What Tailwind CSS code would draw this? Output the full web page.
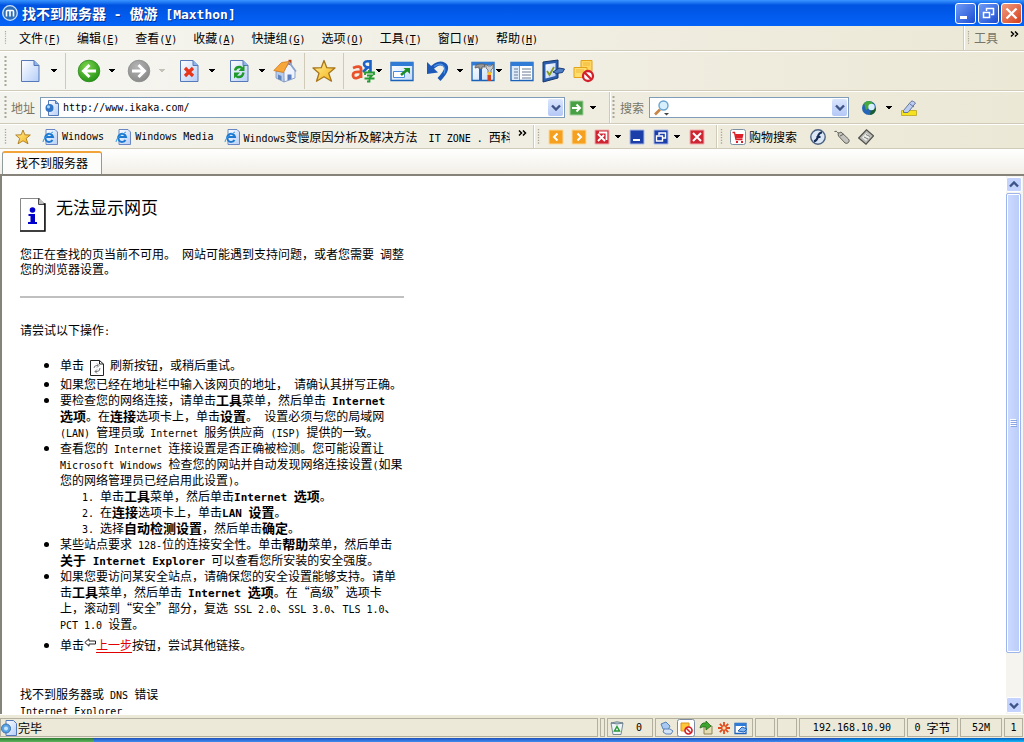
<!DOCTYPE html>
<html lang="zh-CN">
<head>
<meta charset="utf-8">
<title>找不到服务器 - 傲游 [Maxthon]</title>
<script src="https://cdn.jsdelivr.net/npm/@tailwindcss/browser@4"></script>
</head>
<body class="flex h-screen flex-col overflow-hidden bg-[#ece9d8] font-['Noto_Sans_CJK_SC',sans-serif] text-[12px] leading-4 text-black [&_span]:font-['DejaVu_Sans_Mono',monospace] [&_span]:text-[10px] [&_span]:leading-none [&_span]:whitespace-pre [&_svg]:shrink-0">

<svg class="absolute size-0" aria-hidden="true">
  <defs>
    <linearGradient id="sheet" x1="0" y1="0" x2="1" y2="1"><stop offset="0" stop-color="#fff"/><stop offset="1" stop-color="#b4cdf8"/></linearGradient>
    <radialGradient id="green" cx=".4" cy=".3" r=".8"><stop offset="0" stop-color="#7bd44a"/><stop offset="1" stop-color="#1c8c12"/></radialGradient>
    <radialGradient id="gray" cx=".4" cy=".3" r=".8"><stop offset="0" stop-color="#b4b4b4"/><stop offset="1" stop-color="#858585"/></radialGradient>
    <linearGradient id="gold" x1="0" y1="0" x2="1" y2="1"><stop offset="0" stop-color="#fff3a0"/><stop offset="1" stop-color="#f5b010"/></linearGradient>
    <linearGradient id="win" x1="0" y1="0" x2="1" y2="1"><stop offset="0" stop-color="#fff"/><stop offset="1" stop-color="#c3dcfa"/></linearGradient>
    <symbol id="caret" viewBox="0 0 8 4"><path d="M1 0h6v1H6v1H5v1H3V2H2V1H1z" fill="currentColor"/></symbol>
    <symbol id="page" viewBox="0 0 24 24"><path d="M3.500 1.500h12.500l5 5v16h-17.500z" fill="url(#sheet)" stroke="#5578b8"/><path d="M16 1.500v5h5" fill="#8fb4ea" stroke="#5578b8"/></symbol>
    <symbol id="star" viewBox="0 0 24 24"><path d="M12 1.500l2.800 7.200 8.200.3-6.300 5.200 2.800 8L12 17.700l-7.500 4.500 2.500-8L1 9l8.200-.3z" fill="url(#gold)" stroke="#a8761c" stroke-width="1.300" stroke-linejoin="round"/></symbol>
    <symbol id="ie" viewBox="0 0 16 16"><path d="M4 .5h9l2.500 2.500v12.500H4z" fill="url(#sheet)" stroke="#6a87c4"/><path d="M10.500 11A4 4 0 1 1 11 8H4" fill="none" stroke="#1d78cf" stroke-width="2"/><path d="M1 13Q1 8 11 3" fill="none" stroke="#3c9be8"/></symbol>
    <symbol id="pageglobe" viewBox="0 0 16 16"><path d="M4.500.5h7l3 3v12h-10z" fill="url(#sheet)" stroke="#5578b8"/><path d="M11.500.5v3h3" fill="#8fb4ea" stroke="#5578b8"/><circle cx="5.500" cy="8" r="4" fill="#2f74c6"/><circle cx="4.500" cy="6.800" r="1.600" fill="#a9d6fa"/></symbol>
    <symbol id="grip" viewBox="0 0 3 24"><path d="M1.500 0v24" stroke="#aaa799" stroke-width="2" stroke-dasharray="2 2"/></symbol>
    <symbol id="chev" viewBox="0 0 10 7"><path d="M1 1.500l4 4 4-4" fill="none" stroke="#3e5486" stroke-width="2.400"/></symbol>
    <symbol id="more" viewBox="0 0 9 6"><path d="M1 .5L3.500 3 1 5.500M5 .5L7.500 3 5 5.500" fill="none" stroke="#000" stroke-width="1.500"/></symbol>
    <symbol id="ban" viewBox="0 0 12 12"><circle cx="6" cy="6" r="4.700" fill="#fff" stroke="#d3202a" stroke-width="2.200"/><path d="M3 3l6 6" stroke="#d3202a" stroke-width="2.200"/></symbol>
  </defs>
</svg>

<header class="flex h-[26px] shrink-0 items-center bg-linear-to-b from-[#3a95ff] via-[#0053e1] via-20% to-[#0463f8] pr-0.5 pl-0.5">
  <svg class="size-4" viewBox="0 0 16 16"><circle cx="8" cy="8" r="7.300" fill="#2f6fb8" stroke="#cfe4fa" stroke-width="1.300"/><path d="M4.500 11.500v-5q0-1 1-1h5q1 0 1 1v5M8 5.500v6" fill="none" stroke="#fff" stroke-width="1.600"/></svg>
  <h1 class="ml-1 flex-1 text-[14px] font-bold text-white [text-shadow:1px_1px_#0a2f8a] [&_span]:text-[13px]">找不到服务器<span> - </span>傲游<span> [Maxthon]</span></h1>
  <div class="flex gap-0.5">
    <button aria-label="最小化" class="size-[21px] rounded-[3px] border border-white bg-linear-to-br from-[#6f9bf5] to-[#1d49d2]"><svg class="size-full" viewBox="0 0 19 19"><path d="M4 12h7v3H4z" fill="#fff"/></svg></button>
    <button aria-label="还原" class="size-[21px] rounded-[3px] border border-white bg-linear-to-br from-[#6f9bf5] to-[#1d49d2]"><svg class="size-full" viewBox="0 0 19 19"><path d="M7.500 7V4.500h7v6H12M7 4.500h8M4.500 8.500h6v5h-6zM4 8.500h7" fill="none" stroke="#fff" stroke-width="1.500"/></svg></button>
    <button aria-label="关闭" class="size-[21px] rounded-[3px] border border-white bg-linear-to-br from-[#f09a7e] to-[#d33c12]"><svg class="size-full" viewBox="0 0 19 19"><path d="M4.500 4.500l10 10M14.500 4.500l-10 10" stroke="#fff" stroke-width="2.300"/></svg></button>
  </div>
</header>

<nav class="flex h-[25px] shrink-0 items-center border-b border-[#cfcbb8] bg-linear-to-r from-[#f5f5f0] to-[#ece8d6] pl-1">
  <svg class="h-3.5 w-[3px]"><use href="#grip"/></svg>
  <div class="ml-3 flex flex-1 gap-4 whitespace-nowrap">
    <button>文件<span>(<u>F</u>)</span></button><button>编辑<span>(<u>E</u>)</span></button><button>查看<span>(<u>V</u>)</span></button><button>收藏<span>(<u>A</u>)</span></button><button>快捷组<span>(<u>G</u>)</span></button><button>选项<span>(<u>O</u>)</span></button><button>工具<span>(<u>T</u>)</span></button><button>窗口<span>(<u>W</u>)</span></button><button>帮助<span>(<u>H</u>)</span></button>
  </div>
  <div class="flex h-full w-[61px] items-center border-l border-[#cfcbb8] pl-[3px] text-[#777568] shadow-[inset_1px_0_#fff]">
    <svg class="h-3.5 w-[3px]"><use href="#grip"/></svg>
    <div class="ml-1">工具</div>
    <button aria-label="更多工具" class="mb-2 ml-3"><svg class="h-1.5 w-[9px]"><use href="#more"/></svg></button>
  </div>
</nav>

<div class="flex h-10 shrink-0 items-center border-t border-b border-t-white border-b-[#cfcbb8] bg-linear-to-r from-[#f6f6f2] to-[#ece8d6] pl-1" role="toolbar" aria-label="标准按钮">
  <svg class="mr-[11px] h-[30px] w-[3px]" viewBox="0 0 3 30"><path d="M1.500 0v30" stroke="#aaa799" stroke-width="2" stroke-dasharray="2 2"/></svg>
  <button aria-label="新建"><svg class="size-6"><use href="#page"/></svg></button>
  <button aria-label="新建选项" class="ml-2"><svg class="h-1 w-2"><use href="#caret"/></svg></button>
  <div class="ml-[7px] h-9 w-px bg-[#cfcbb8]"></div>
  <button aria-label="后退" class="ml-[11px]"><svg class="size-6" viewBox="0 0 24 24"><circle cx="12" cy="12" r="10.800" fill="url(#green)" stroke="#2b8a1c" stroke-width=".8"/><path d="M19 12H7M12.500 6L6.500 12l6 6" fill="none" stroke="#fff" stroke-width="3"/></svg></button>
  <button aria-label="后退记录" class="ml-[7px]"><svg class="h-1 w-2"><use href="#caret"/></svg></button>
  <button aria-label="前进" class="ml-[11px]"><svg class="size-6" viewBox="0 0 24 24"><circle cx="12" cy="12" r="10.800" fill="url(#gray)" stroke="#8a8a8a" stroke-width=".8"/><path d="M5 12h12M11.500 6l6 6-6 6" fill="none" stroke="#fff" stroke-width="3"/></svg></button>
  <button aria-label="前进记录" class="ml-[7px] text-[#c4c2b8]"><svg class="h-1 w-2"><use href="#caret"/></svg></button>
  <button aria-label="停止" class="ml-[11px]"><svg class="size-6" viewBox="0 0 24 24"><use href="#page"/><path d="M8 9l8 8M16 9l-8 8" stroke="#e8351a" stroke-width="3.200"/></svg></button>
  <button aria-label="停止选项" class="ml-[7px]"><svg class="h-1 w-2"><use href="#caret"/></svg></button>
  <button aria-label="刷新" class="ml-[11px]"><svg class="size-6" viewBox="0 0 24 24"><use href="#page"/><path d="M8 11.500q1-4 5-3.500l2 1M16.500 13.500q-1 5-5.500 4.500l-2-1" fill="none" stroke="#1d9a27" stroke-width="2.400"/><path d="M17.500 6v6h-6zM7 19.500v-6h6z" fill="#1d9a27"/></svg></button>
  <button aria-label="刷新选项" class="ml-[7px]"><svg class="h-1 w-2"><use href="#caret"/></svg></button>
  <button aria-label="主页" class="ml-[7px]"><svg class="size-6" viewBox="0 0 24 24"><path d="M10 13l6-9 6 8v7l-11 4z" fill="#eef3fc" stroke="#8ba3cc"/><path d="M3 12v7l8 4V13z" fill="#b9cdec" stroke="#7a92bd" stroke-width=".8"/><path d="M5 15.500l3.500 1.500v4.500L5 20z" fill="#6083bb"/><path d="M14.500 15.500h4V20l-4 1.500z" fill="#5b7fc0"/><path d="M15.500.8h3v5h-3z" fill="#b7401c"/><path d="M8.500 3.500L16 2.500 10.500 13.500.8 11.500z" fill="#f7a63a" stroke="#d27a1c" stroke-width=".8"/><path d="M16 3l7 9.500" fill="none" stroke="#8ba3cc" stroke-width="1.600"/></svg></button>
  <div class="ml-[7px] h-9 w-px bg-[#cfcbb8]"></div>
  <button aria-label="收藏" class="ml-[7px]"><svg class="size-6"><use href="#star"/></svg></button>
  <div class="ml-[7px] h-9 w-px bg-[#cfcbb8]"></div>
  <button aria-label="翻译" class="ml-[7px]"><svg class="size-6" viewBox="0 0 24 24"><path d="M2 9q8-3 8 1v9M9.500 13Q2 12 2 16t4 3 4-4" fill="none" stroke="#e8512a" stroke-width="2.800"/><path d="M19.500 1v13M19 2.500q-6-1-6 2.500t6 3.500M17 8l-5 5" fill="none" stroke="#1a62c8" stroke-width="2.600"/><path d="M18 11v2M14 16v-2.500h9V16M16 16.500h5l-2.500 2.500v3.500h-2.500M13.500 19.500h10" fill="none" stroke="#259a32" stroke-width="1.800"/></svg></button>
  <button aria-label="翻译选项"><svg class="h-1 w-2"><use href="#caret"/></svg></button>
  <button aria-label="全屏" class="ml-[7px]"><svg class="size-6" viewBox="0 0 24 24"><path d="M1 3.500h22v18H1z" fill="url(#win)" stroke="#1a61b8" stroke-width="1.300"/><path d="M1 3h22v4H1z" fill="#2f7bd6"/><path d="M3.500 12.500h11v6h-11z" fill="#fff" stroke="#4b8bdb"/><path d="M11 16l6-5" stroke="#1d8d25" stroke-width="2.600"/><path d="M13.500 9H20v6z" fill="#1d8d25"/></svg></button>
  <button aria-label="撤销" class="ml-[11px]"><svg class="size-6" viewBox="0 0 24 24"><path d="M5 11Q13 2 19 5.500T14 20.500" fill="none" stroke="#1c59b8" stroke-width="4"/><path d="M2 3v12l11-1.500z" fill="#1c59b8"/><path d="M9 7.500q6-4 9-1t1 8" fill="none" stroke="#4a93e4" stroke-width="1.200"/></svg></button>
  <button aria-label="撤销列表" class="ml-[7px]"><svg class="h-1 w-2"><use href="#caret"/></svg></button>
  <button aria-label="工具" class="ml-[7px]"><svg class="size-6" viewBox="0 0 24 24"><path d="M1 3.500h22v18H1z" fill="url(#win)" stroke="#1a61b8" stroke-width="1.300"/><path d="M1 3h22v3.500H1z" fill="#2f7bd6"/><path d="M4 9q0-4 5-4h4l1 3h-3v2H8V8z" fill="#999" stroke="#555" stroke-width=".8"/><path d="M8 10h3v12H8z" fill="#2765ba"/><path d="M15 5v4l2 2v3h3v-3l2-2V5l-2 2h-3z" fill="#ccc" stroke="#666" stroke-width=".8"/><path d="M16.500 13h3.500v4h-3.500z" fill="#f6bd27"/><path d="M16.500 16h3.500v6h-3.500z" fill="#cf4322"/></svg></button>
  <button aria-label="工具选项"><svg class="h-1 w-2"><use href="#caret"/></svg></button>
  <button aria-label="侧边栏" class="ml-[7px]"><svg class="size-6" viewBox="0 0 24 24"><path d="M1 3.500h22v18H1z" fill="#fff" stroke="#1a61b8" stroke-width="1.300"/><path d="M1 3h22v4H1z" fill="#2f7bd6"/><path d="M2 7h7v14H2z" fill="#dcebfc"/><path d="M9.500 7v14" stroke="#6fa0dc"/><path d="M4 10h4M4 13h4M4 16h4M4 19h4M12 10h9M12 13h9M12 16h9M12 19h9" stroke="#6a7a94"/></svg></button>
  <button aria-label="表单填写" class="ml-[7px]"><svg class="size-6" viewBox="0 0 24 24"><path d="M2 3l15-2v18L2 23z" fill="#2c5dac" stroke="#163870"/><path d="M4.500 5.500l10-1.500v13l-10 2.500z" fill="url(#sheet)"/><path d="M6 12l2.500 4L13 8" fill="none" stroke="#869a22" stroke-width="1.800"/><path d="M12 13l6-4 5.500 1-2 3.500-6 1z" fill="#4c7cc4" stroke="#1c3d7a"/></svg></button>
  <button aria-label="拦截" class="ml-[7px]"><svg class="size-6" viewBox="0 0 24 24"><path d="M9 1.500h11v11H9z" fill="#ffd75e" stroke="#e3a21a"/><path d="M2 8.500h13v10H2z" fill="#ffdd6e" stroke="#e3a21a"/><path d="M4 11h8M4 13h8M11 4h7M11 6h7" stroke="#f0b63c"/><circle cx="16" cy="17" r="5" fill="#fff" stroke="#d3202a" stroke-width="2.300"/><path d="M12.500 13.500l7 7" stroke="#d3202a" stroke-width="2.300"/></svg></button>
</div>

<div class="flex h-[33px] shrink-0 items-center border-t border-b border-t-white border-b-[#cfcbb8] bg-linear-to-r from-[#f4f4ee] to-[#ece8d6]">
  <form class="flex h-full min-w-0 flex-1 items-center border-r border-[#cfcbb8] pl-1">
    <svg class="h-6 w-[3px]"><use href="#grip"/></svg>
    <label for="addr" class="ml-1 shrink-0 text-[#777568]">地址</label>
    <div class="ml-[5px] flex h-[21px] min-w-0 flex-1 items-center border border-[#7f9db9] bg-white pr-px pl-[3px]">
      <svg class="size-4"><use href="#pageglobe"/></svg>
      <input id="addr" value="http://www.ikaka.com/" class="ml-[3px] min-w-0 flex-1 bg-transparent font-['DejaVu_Sans_Mono',monospace] text-[10px] outline-none">
      <button type="button" aria-label="地址列表" class="flex h-[17px] w-[15px] items-center justify-center rounded-xs bg-linear-to-b from-[#dbe6fd] to-[#b4c8f6]"><svg class="h-[7px] w-2.5"><use href="#chev"/></svg></button>
    </div>
    <button aria-label="转到" class="ml-1"><svg class="size-4" viewBox="0 0 16 16"><path d="M1 1h13v14H1z" fill="#48a045" stroke="#a5cfa0"/><path d="M3 8h8M7.500 4.500L11 8l-3.500 3.500" fill="none" stroke="#fff" stroke-width="2"/></svg></button>
    <button type="button" aria-label="转到选项" class="mr-3 ml-1"><svg class="h-1 w-2"><use href="#caret"/></svg></button>
  </form>
  <form class="flex h-full w-[414px] items-center pl-0.5 shadow-[inset_1px_0_#fff]">
    <svg class="h-6 w-[3px]"><use href="#grip"/></svg>
    <label for="find" class="ml-[5px] text-[#777568]">搜索</label>
    <div class="ml-[5px] flex h-[21px] w-[200px] items-center border border-[#7f9db9] bg-white pr-px pl-1">
      <svg class="size-4" viewBox="0 0 16 16"><path d="M1 14.500l5-5" stroke="#c98546" stroke-width="2.600"/><circle cx="9.500" cy="5.500" r="4.500" fill="#d6f0fd" stroke="#6aa4cc" stroke-width="1.400"/><path d="M10 13h5l-2.500 2.500z" fill="#444"/></svg>
      <input id="find" class="min-w-0 flex-1 bg-transparent outline-none">
      <button type="button" aria-label="搜索列表" class="flex h-[17px] w-[15px] items-center justify-center rounded-xs bg-linear-to-b from-[#dbe6fd] to-[#b4c8f6]"><svg class="h-[7px] w-2.5"><use href="#chev"/></svg></button>
    </div>
    <button aria-label="搜索引擎" class="ml-3"><svg class="size-4" viewBox="0 0 16 16"><circle cx="8" cy="8" r="7" fill="#2665b5"/><path d="M3 3q5-4 9 0l-3 4-4 3z" fill="#47a83c"/><path d="M9 15q6-1 6-7l-5 1z" fill="#1c5c34"/><circle cx="10.500" cy="7" r="3.200" fill="#d7effa"/></svg></button>
    <button type="button" aria-label="引擎列表" class="ml-2"><svg class="h-1 w-2"><use href="#caret"/></svg></button>
    <button type="button" aria-label="高亮" class="ml-2"><svg class="size-4" viewBox="0 0 16 16"><path d="M.5 10.500h15v5H.5z" fill="#f6e21f" stroke="#b7a325" stroke-width=".8"/><path d="M2.500 10.500L10 1.500q1-1 2.500 0l2 1.500-7.500 9.500H2.500z" fill="#bccdf2" stroke="#66779f"/><path d="M9 4l4 3" stroke="#66779f"/></svg></button>
  </form>
</div>

<div class="flex h-[25px] shrink-0 items-center border-t border-b border-t-white border-b-[#cfcbb8] bg-linear-to-r from-[#f4f4ee] to-[#ece8d6] whitespace-nowrap">
  <div class="flex h-full min-w-0 flex-1 items-center border-r border-[#cfcbb8] pl-1">
    <svg class="h-4 w-[3px]"><use href="#grip"/></svg>
    <button aria-label="收藏夹" class="ml-2"><svg class="size-4"><use href="#star"/></svg></button>
    <div class="ml-[11px] flex min-w-0 flex-1 items-center gap-[11px] overflow-hidden">
      <a href="#" class="flex items-center gap-1"><svg class="size-4"><use href="#ie"/></svg><span>Windows</span></a>
      <a href="#" class="flex items-center gap-1"><svg class="size-4"><use href="#ie"/></svg><span>Windows Media</span></a>
      <a href="#" class="flex items-center gap-[3px]"><svg class="size-4"><use href="#ie"/></svg><div><span>Windows</span>变慢原因分析及解决方法</div></a>
      <a href="#"><span>IT ZONE . </span>西科</a>
    </div>
    <button aria-label="更多链接" class="mr-1.5 mb-2 ml-2"><svg class="h-1.5 w-[9px]"><use href="#more"/></svg></button>
  </div>
  <div class="flex h-full w-[183px] shrink-0 items-center border-r border-[#cfcbb8] pl-[3px] shadow-[inset_1px_0_#fff]">
    <svg class="h-4 w-[3px]"><use href="#grip"/></svg>
    <button aria-label="上一标签" class="ml-2"><svg class="size-4" viewBox="0 0 16 16"><path d="M1 1h14v14H1z" fill="#f5a01e" stroke="#fbd99a"/><path d="M9.500 4.500L6 8l3.500 3.500" fill="none" stroke="#fff" stroke-width="2"/></svg></button>
    <button aria-label="下一标签" class="ml-[7px]"><svg class="size-4" viewBox="0 0 16 16"><path d="M1 1h14v14H1z" fill="#f5a01e" stroke="#fbd99a"/><path d="M6.500 4.500L10 8l-3.500 3.500" fill="none" stroke="#fff" stroke-width="2"/></svg></button>
    <button aria-label="关闭标签" class="ml-[7px]"><svg class="size-4" viewBox="0 0 16 16"><path d="M1 1h14v14H1z" fill="#cf2532" stroke="#eeb0b0"/><path d="M4 5l7 7M10 6l-6 6M5 3.500h7.500V11" fill="none" stroke="#fff" stroke-width="1.800"/></svg></button>
    <button aria-label="关闭选项" class="ml-1"><svg class="h-1 w-2"><use href="#caret"/></svg></button>
    <button aria-label="最小化标签" class="ml-[7px]"><svg class="size-4" viewBox="0 0 16 16"><path d="M1 1h14v14H1z" fill="#1c3ea8" stroke="#aab9e8"/><path d="M4 10h7v2H4z" fill="#fff"/></svg></button>
    <button aria-label="还原标签" class="ml-2"><svg class="size-4" viewBox="0 0 16 16"><path d="M1 1h14v14H1z" fill="#1c3ea8" stroke="#aab9e8"/><path d="M6 6V4h6.500v5H10M3.500 7h6v5h-6z" fill="none" stroke="#fff" stroke-width="1.400"/></svg></button>
    <button aria-label="还原选项" class="ml-1"><svg class="h-1 w-2"><use href="#caret"/></svg></button>
    <button aria-label="关闭全部" class="ml-2"><svg class="size-4" viewBox="0 0 16 16"><path d="M1 1h14v14H1z" fill="#cf2532" stroke="#eeb0b0"/><path d="M4 4l8 8M12 4l-8 8" stroke="#fff" stroke-width="2"/></svg></button>
  </div>
  <div class="flex h-full w-[307px] shrink-0 items-center pl-[3px] shadow-[inset_1px_0_#fff]">
    <svg class="h-4 w-[3px]"><use href="#grip"/></svg>
    <button class="ml-[7px] flex items-center gap-[3px]"><svg class="size-4" viewBox="0 0 16 16"><rect x=".5" y=".5" width="15" height="15" rx="2" fill="#fff" stroke="#7a90a4"/><path d="M2.500 3.500h2l1.500 7h6.500" fill="none" stroke="#dc1f28" stroke-width="1.300"/><path d="M5 5h8.500l-1 4.500H6z" fill="#dc1f28"/><path d="M6 12h2v2H6zM11 12h2v2h-2z" fill="#dc1f28"/></svg>购物搜索</button>
    <button aria-label="Flash 过滤" class="ml-[13px]"><svg class="size-4" viewBox="0 0 16 16"><circle cx="8" cy="8" r="7.200" fill="#dbe7f5" stroke="#4c6280" stroke-width="1.400"/><path d="M12 3.500q-3 0-4 4t-4 5M6.500 8h4" fill="none" stroke="#152c55" stroke-width="2.200"/></svg></button>
    <button aria-label="鼠标手势" class="ml-2"><svg class="size-4" viewBox="0 0 16 16"><path d="M.5 2.500q2-1 3 1l2 1" fill="none" stroke="#555"/><path d="M4 4.500l3-1.500 7.500 7q1.500 2 0 3.500t-3.500.5L4.500 7z" fill="#c5c3be" stroke="#66645e"/><path d="M6 7l4-2" stroke="#66645e"/></svg></button>
    <button aria-label="清除" class="ml-2"><svg class="size-4" viewBox="0 0 16 16"><path d="M.7 9L8.500.8l7 6-7.500 8.400z" fill="#b9b9b5" stroke="#50504c" stroke-width="1.200"/><path d="M4 8.500L8.500 4l4 3.200-4.500 4.700z" fill="#ecece8"/><path d="M6 8l4 2M8 5.500l4 2" stroke="#777"/></svg></button>
  </div>
</div>

<div class="flex h-[27px] shrink-0 items-end border-b-2 border-[#85837a] bg-linear-to-b from-white to-[#f1efe6] pl-0.5" role="tablist">
  <button role="tab" aria-selected="true" class="h-[23px] w-[100px] rounded-t-[3px] border-x border-t-2 border-x-[#919b9c] border-t-[#f2a43a] bg-[#fcfcfb] pb-0.5">找不到服务器</button>
</div>

<div class="flex min-h-0 flex-1 border-l-2 border-[#85837a] bg-white">
  <main class="min-w-0 flex-1 overflow-hidden pt-[22px] pl-[18px] whitespace-nowrap [&_b]:text-[13px] [&_b]:leading-none [&_b_span]:text-[11px]">
    <div class="flex h-[34px] gap-2.5">
      <svg class="h-[34px] w-[26px]" viewBox="0 0 26 34"><path d="M.5 32V.5H19l5.500 5.500v26.500" fill="#fff" stroke="#888"/><path d="M19 .5V6h6v27H0" fill="none" stroke="#000" stroke-width="1.400"/><path d="M19 1l5 5h-5z" fill="#bbb"/><circle cx="12.500" cy="12" r="2.800" fill="#0000cd"/><path d="M8.500 16h6.500v8h2v2H8v-2h2.500v-6h-2z" fill="#0000cd"/></svg>
      <h2 class="text-[17px] leading-[18px]">无法显示网页</h2>
    </div>
    <p class="mt-3.5 leading-[15px]">您正在查找的页当前不可用。<span> </span>网站可能遇到支持问题，或者您需要<span> </span>调整<br>您的浏览器设置。</p>
    <hr class="mt-5 h-0.5 w-96 border-0 bg-[#c0c0c0]">
    <p class="mt-6">请尝试以下操作<span>:</span></p>
    <ul class="mt-[18px] list-disc pl-10">
      <li class="h-5 leading-[18px]">单击<span> </span><svg class="inline h-4 w-3.5 align-[-6px]" viewBox="0 0 14 16"><path d="M.5.500h9L13.500 4v11.500H.500z" fill="#fff" stroke="#222"/><path d="M9.500.5V4h4" fill="none" stroke="#222"/><path d="M4 8q0-2.500 3-2.500h1M10 8q0 3.500-3 3.500H5M7 3.500l2 2-2 2M7 9.500l-2 2 2 2" fill="none" stroke="#777"/></svg><span> </span>刷新按钮，或稍后重试。</li>
      <li>如果您已经在地址栏中输入该网页的地址，<span> </span>请确认其拼写正确。</li>
      <li>要检查您的网络连接，请单击<b>工具</b>菜单，然后单击<span> </span><b><span>Internet</span><br>选项</b>。在<b>连接</b>选项卡上，单击<b>设置</b>。<span> </span>设置必须与您的局域网<br><span>(LAN) </span>管理员或<span> Internet </span>服务供应商<span> (ISP) </span>提供的一致。</li>
      <li>查看您的<span> Internet </span>连接设置是否正确被检测。您可能设置让<br><span>Microsoft Windows </span>检查您的网站并自动发现网络连接设置<span>(</span>如果<br>您的网络管理员已经启用此设置<span>)</span>。
        <ol class="list-decimal pl-10 marker:font-['DejaVu_Sans_Mono',monospace] marker:text-[10px]">
          <li>单击<b>工具</b>菜单，然后单击<b><span>Internet </span>选项</b>。</li>
          <li>在<b>连接</b>选项卡上，单击<b><span>LAN </span>设置</b>。</li>
          <li>选择<b>自动检测设置</b>，然后单击<b>确定</b>。</li>
        </ol>
      </li>
      <li>某些站点要求<span> 128-</span>位的连接安全性。单击<b>帮助</b>菜单，然后单击<br><b>关于<span> Internet Explorer</span></b><span> </span>可以查看您所安装的安全强度。</li>
      <li>如果您要访问某安全站点，请确保您的安全设置能够支持。请单<br>击<b>工具</b>菜单，然后单击<span> </span><b><span>Internet </span>选项</b>。在“高级”选项卡<br>上，滚动到“安全”部分，复选<span> SSL 2.0</span>、<span>SSL 3.0</span>、<span>TLS 1.0</span>、<br><span>PCT 1.0 </span>设置。</li>
      <li class="mt-[5px]">单击<svg class="inline h-2.5 w-3 align-[2px]" viewBox="0 0 12 10"><path d="M5 .8L.8 4.500 5 8.200V6h6.500V3H5z" fill="#fff" stroke="#222"/></svg><a href="#" class="text-[#e00000] underline underline-offset-2">上一步</a>按钮，尝试其他链接。</li>
    </ul>
    <p class="mt-[33px]">找不到服务器或<span> DNS </span>错误<br><span>Internet Explorer</span></p>
  </main>
  <div class="flex w-[18px] shrink-0 flex-col border-r border-[#d8d5c6] bg-[#f5f4ee] pt-px">
    <button aria-label="向上滚动" class="flex h-[15px] w-4 items-center justify-center rounded-xs border border-white bg-[#c3d3fd]"><svg class="h-[7px] w-2.5 rotate-180"><use href="#chev"/></svg></button>
    <div class="flex min-h-0 flex-1 flex-col">
      <div class="mt-px flex w-[15px] basis-[91%] items-center justify-center rounded-xs border border-[#9db4ec] bg-linear-to-r from-[#cddbff] to-[#b9cbf8] inset-ring inset-ring-white"><svg class="h-2 w-[7px]" viewBox="0 0 7 8"><path d="M0 .5h6M0 2.500h6M0 4.500h6M0 6.500h6" stroke="#fff"/><path d="M1 1.500h6M1 3.500h6M1 5.500h6M1 7.500h6" stroke="#8ca6e4"/></svg></div>
    </div>
    <button aria-label="向下滚动" class="mb-px flex h-4 w-4 items-center justify-center rounded-xs border border-white bg-[#c3d3fd]"><svg class="h-[7px] w-2.5"><use href="#chev"/></svg></button>
  </div>
</div>

<footer class="flex h-[24px] shrink-0 gap-0.5 border-t border-white bg-[#ece9d8] pt-[3px] pr-px pb-px whitespace-nowrap [&>div]:flex [&>div]:items-center [&>div]:border [&>div]:border-[#b3b09f]">
  <div class="min-w-0 flex-1 gap-px"><svg class="size-4" viewBox="0 0 16 16"><path d="M5 .5h7.500l3 3v12H5z" fill="url(#sheet)" stroke="#5578b8"/><circle cx="5" cy="8.500" r="4.500" fill="#58a4e6" stroke="#3c6fae"/><circle cx="5" cy="8.500" r="2" fill="#c8e6fc"/></svg>完毕</div>
  <div class="w-[5px]"></div>
  <div class="w-[46px] gap-3 pl-0.5"><svg class="size-3.5" viewBox="0 0 14 14"><path d="M1 2h12l-2 11.500H3z" fill="#eef4f8" stroke="#778a96"/><path d="M1 2q6-2.500 12 0-6 2-12 0z" fill="#b5c6d2" stroke="#667a88" stroke-width=".8"/><path d="M7 5.500l2.500 4.500h-5z" fill="none" stroke="#289b36" stroke-width="1.500"/></svg><span>0</span></div>
  <div class="w-[98px] justify-around px-0.5">
    <svg class="size-3.5" viewBox="0 0 14 14"><path d="M1 3l5-2 4 4-2 4-5-1z" fill="#a8c9f2" stroke="#5a82b8"/><path d="M4 8h6l3 2-2 3H6l-3-2z" fill="#d3e4f8" stroke="#5a82b8"/></svg>
    <svg class="size-[18px]" viewBox="0 0 18 18"><rect x=".5" y=".5" width="17" height="17" rx="2" fill="#fff" stroke="#7d8ba0"/><path d="M4 4h8v8H4z" fill="#ffc83a" stroke="#d8921a"/><svg x="7" y="7" width="9" height="9"><use href="#ban"/></svg></svg>
    <svg class="size-3.5" viewBox="0 0 14 14"><path d="M5 5h8v8H5z" fill="#e6ddb4" stroke="#8c8458"/><path d="M1 7q1-6 6-5V0l5 5-5 4V6Q4 5 1 7z" fill="#3ca52f" stroke="#236b1c" stroke-width=".8"/></svg>
    <svg class="size-3.5" viewBox="0 0 14 14"><path d="M7 1v12M1 7h12M2.800 2.800l8.400 8.400M11.200 2.800l-8.400 8.400" stroke="#e04a1c" stroke-width="1.800"/><circle cx="7" cy="7" r="2.200" fill="#fbe1b8" stroke="#e04a1c"/></svg>
    <svg class="size-3.5" viewBox="0 0 14 14"><path d="M1 2.500h11v10H1z" fill="#fff" stroke="#1f62bd" stroke-width="1.300"/><path d="M1 2h11v3H1z" fill="#2f7bd6"/><path d="M4 10l4-4 5 2-3 3z" fill="#83b5f0" stroke="#1f62bd"/></svg>
  </div>
  <div class="w-5"></div>
  <div class="w-5"></div>
  <div class="w-[106px] justify-center"><span>192.168.10.90</span></div>
  <div class="w-[51px] justify-center"><span>0 </span>字节</div>
  <div class="w-[42px] justify-center"><span>52M</span></div>
  <div class="w-[19px] justify-center"><span>1</span></div>
</footer>
<div class="flex h-1 shrink-0 bg-linear-to-b from-[#1f50bb] to-[#3f8cf3]">
  <div class="w-[94px] rounded-tr-xs bg-linear-to-b from-[#2c7a34] to-[#5eb55c]"></div>
  <div class="flex-1"></div>
  <div class="w-[184px] bg-linear-to-b from-[#0c5fc0] to-[#19b9f8]"></div>
</div>
</body>
</html>
